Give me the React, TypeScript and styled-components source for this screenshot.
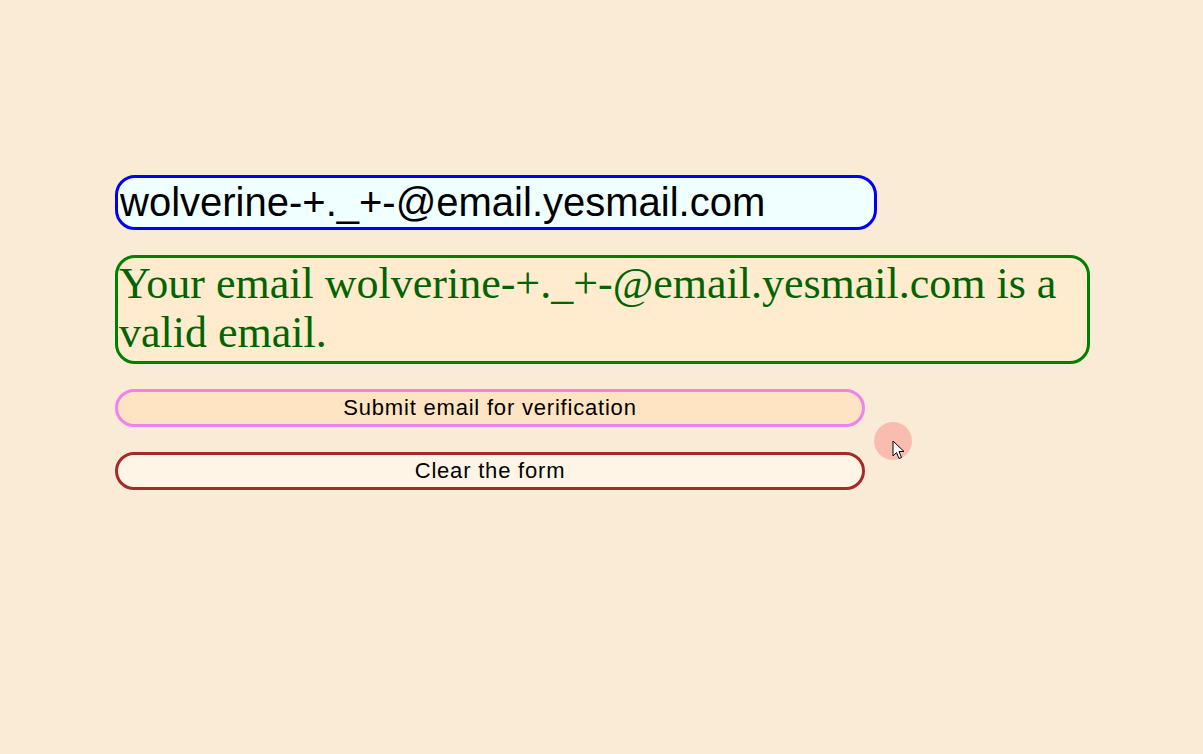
import React, { useState } from "react";
import styled, { createGlobalStyle } from "styled-components";

const GlobalStyle = createGlobalStyle`
  html, body {
    margin: 0;
    padding: 0;
    background: #faebd7;
  }
  body {
    font-family: "Liberation Sans", Arial, sans-serif;
  }
`;

const Page = styled.div`
  position: relative;
  min-height: 754px;
  padding: 175px 0 0 115px;
  box-sizing: border-box;
`;

const Form = styled.form`
  display: flex;
  flex-direction: column;
  align-items: flex-start;
`;

const EmailInput = styled.input`
  width: 762px;
  height: 55px;
  box-sizing: border-box;
  border: 3px solid #0000ee;
  border-radius: 20px;
  background: #f0ffff;
  padding: 0 2px;
  font-family: "Liberation Sans", Arial, sans-serif;
  font-size: 40px;
  color: #000;
  outline: none;
`;

const Result = styled.div`
  margin-top: 25px;
  width: 975px;
  box-sizing: border-box;
  border: 3px solid #008000;
  border-radius: 20px;
  background: #ffebcd;
  padding: 1px 2px 4px 1px;
  font-family: "Liberation Serif", "Times New Roman", serif;
  font-size: 44px;
  line-height: 49px;
  color: #006400;
`;

const Button = styled.button<{ $border: string; $bg: string; $gap: number }>`
  margin-top: ${(p) => p.$gap}px;
  width: 750px;
  height: 38px;
  box-sizing: border-box;
  border: 3px solid ${(p) => p.$border};
  border-radius: 20px;
  background: ${(p) => p.$bg};
  font-family: "Liberation Sans", Arial, sans-serif;
  font-size: 22px;
  letter-spacing: 0.8px;
  color: #000;
  cursor: pointer;
`;

const ClickMark = styled.div`
  position: absolute;
  left: 874px;
  top: 422px;
  width: 38px;
  height: 38px;
  border-radius: 50%;
  background: rgba(248, 170, 160, 0.7);
`;

const Cursor = styled.svg`
  position: absolute;
  left: 892px;
  top: 440px;
`;

export default function App() {
  const [email, setEmail] = useState("wolverine-+._+-@email.yesmail.com");

  return (
    <Page>
      <GlobalStyle />
      <Form onSubmit={(e) => e.preventDefault()}>
        <EmailInput value={email} onChange={(e) => setEmail(e.target.value)} />
        <Result>
          Your email wolverine-+._+-@email.yesmail.com is a valid email.
        </Result>
        <Button type="submit" $border="#ee82ee" $bg="#ffe4c4" $gap={25}>
          Submit email for verification
        </Button>
        <Button type="button" $border="#a52a2a" $bg="#fff5e6" $gap={25} onClick={() => setEmail("")}>
          Clear the form
        </Button>
      </Form>
      <ClickMark />
      <Cursor width="13" height="20" viewBox="0 0 13 20">
        <path d="M1 1 L1 16 L4.5 12.5 L7 18.5 L9.5 17.5 L7 11.5 L12 11.5 Z" fill="#fff" stroke="#000" strokeWidth="1" strokeLinejoin="round" />
      </Cursor>
    </Page>
  );
}
